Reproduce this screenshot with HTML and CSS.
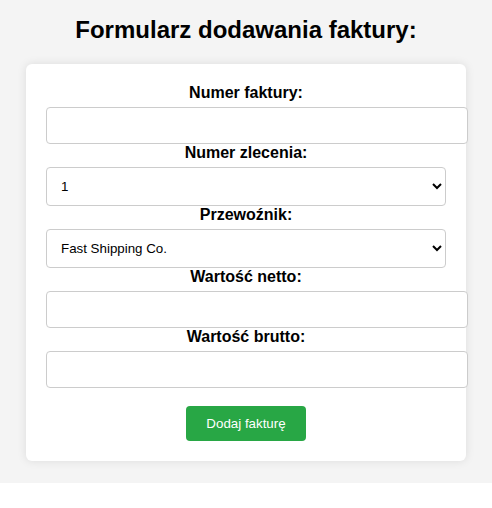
FILE: index.html
```html
<!DOCTYPE html>
<html lang="pl">
<head>
<meta charset="utf-8">
<title>Formularz dodawania faktury</title>
<link rel="stylesheet" href="styles.css">
</head>
<body>
<div class="page">
  <h1 class="title">Formularz dodawania faktury:</h1>
  <form class="card">
    <label class="label" for="nr">Numer faktury:</label>
    <input class="field" id="nr" type="text">
    <label class="label" for="zl">Numer zlecenia:</label>
    <select class="select" id="zl"><option>1</option></select>
    <label class="label" for="pr">Przewoźnik:</label>
    <select class="select" id="pr"><option>Fast Shipping Co.</option></select>
    <label class="label" for="net">Wartość netto:</label>
    <input class="field" id="net" type="text">
    <label class="label" for="bru">Wartość brutto:</label>
    <input class="field" id="bru" type="text">
    <div class="actions"><button class="btn" type="button">Dodaj fakturę</button></div>
  </form>
</div>
</body>
</html>
```
FILE: styles.css
```css
html { background: #fff; }
body {
  margin: 0;
  font-family: "Liberation Sans", Arial, sans-serif;
}
.page {
  background: #f4f4f4;
  padding: 16px 0 22px;
}
.title {
  margin: 0 0 20px;
  font-size: 24px;
  font-weight: bold;
  text-align: center;
  color: #000;
}
.card {
  width: 400px;
  margin: 0 auto;
  padding: 20px;
  background: #fff;
  border-radius: 6px;
  box-shadow: 0 0 10px rgba(0,0,0,0.1);
}
.label {
  display: block;
  text-align: center;
  font-weight: bold;
  font-size: 16px;
  margin-bottom: 5px;
  color: #000;
}
.field {
  display: block;
  width: 100%;
  padding: 10px;
  border: 1px solid #ccc;
  border-radius: 4px;
  font-family: "Liberation Sans", Arial, sans-serif;
  font-size: 13.333px;
  margin: 0;
  background: #fff;
}
.select {
  display: block;
  width: 100%;
  padding: 10px;
  border: 1px solid #ccc;
  border-radius: 4px;
  font-family: "Liberation Sans", Arial, sans-serif;
  font-size: 13.333px;
  margin: 0;
  background: #fff;
  color: #000;
}
.actions {
  text-align: center;
  margin-top: 18px;
  line-height: 0;
}
.btn {
  background: #28a745;
  color: #fff;
  border: none;
  border-radius: 4px;
  padding: 10px 20px;
  font-family: "Liberation Sans", Arial, sans-serif;
  font-size: 13.333px;
  line-height: normal;
  cursor: pointer;
}
```
